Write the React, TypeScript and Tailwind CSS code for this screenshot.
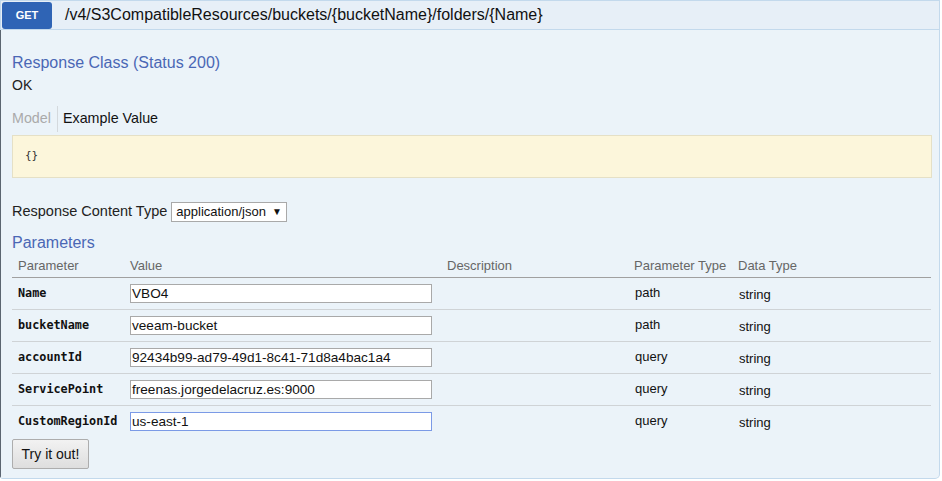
import React from "react";

const rows = [
  { name: "Name", value: "VBO4", type: "path" },
  { name: "bucketName", value: "veeam-bucket", type: "path" },
  { name: "accountId", value: "92434b99-ad79-49d1-8c41-71d8a4bac1a4", type: "query" },
  { name: "ServicePoint", value: "freenas.jorgedelacruz.es:9000", type: "query" },
  { name: "CustomRegionId", value: "us-east-1", type: "query", focused: true },
];

export default function App() {
  return (
    <div className="w-[942px] h-[481px] bg-white font-['Liberation_Sans',Arial,sans-serif] text-[#222]">
      <div className="w-[940px] h-[479px] border border-l-0 border-[#c3d9ec] rounded-br-[5px] rounded-bl-[3px] bg-[#ebf3f9] flex flex-col overflow-hidden">
        <div className="h-[29px] shrink-0 bg-[#e7eff7] border-b border-l border-[#c3d9ec] flex items-center">
          <div className="ml-[1px] w-[50px] h-[27px] bg-[#2f64b5] rounded-[3px] flex items-center justify-center text-white text-[11px] font-bold">
            GET
          </div>
          <div className="ml-[13px] text-[16px] text-[#111] leading-none">
            /v4/S3CompatibleResources/buckets/{"{"}bucketName{"}"}/folders/{"{"}Name{"}"}
          </div>
        </div>
        <div className="flex-1 border-l border-[#5b6570] px-[11px] pt-[23px]">
          <div className="text-[16px] leading-[20px] text-[#4a67b5]">Response Class (Status 200)</div>
          <div className="text-[14px] leading-[18px] mt-[3px] text-[#222]">OK</div>
          <div className="flex items-center mt-[12px] h-[26px] text-[14.3px]">
            <span className="text-[#aaa] pr-[6px]">Model</span>
            <span className="w-px h-[26px] bg-[#d4d9dd]" />
            <span className="pl-[5px] text-[#111]">Example Value</span>
          </div>
          <div className="mt-[3px] w-[920px] h-[43px] bg-[#fcf6db] border border-[#e5e0c6] flex items-center pl-[12px] text-[11px] font-['DejaVu_Sans_Mono',monospace] text-[#333]">
            {"{}"}
          </div>
          <div className="mt-[23px] flex items-center text-[14.5px]">
            <span>Response Content Type</span>
            <span className="ml-[4px] h-[20px] w-[116px] bg-white border border-[#a9a9a9] flex items-center pl-[4px] text-[13px] text-[#111]">
              application/json
              <span className="ml-[6px] text-[10px]">▼</span>
            </span>
          </div>
          <div className="mt-[10px] text-[16px] leading-[20px] text-[#4a67b5]">Parameters</div>
          <table className="mt-[2px] w-[919px] border-collapse table-fixed">
            <colgroup>
              <col className="w-[113px]" />
              <col className="w-[317px]" />
              <col className="w-[187px]" />
              <col className="w-[104px]" />
              <col className="w-[198px]" />
            </colgroup>
            <thead>
              <tr className="border-b border-[#a0a0a0] text-[13px] text-[#666] text-left">
                <th className="font-normal pl-[6px] pb-[3px] h-[23px] align-bottom leading-[16px]">Parameter</th>
                <th className="font-normal pl-[5px] pb-[3px] align-bottom leading-[16px]">Value</th>
                <th className="font-normal pl-[5px] pb-[3px] align-bottom leading-[16px]">Description</th>
                <th className="font-normal pl-[5px] pb-[3px] align-bottom leading-[16px]">Parameter Type</th>
                <th className="font-normal pl-[5px] pb-[3px] align-bottom leading-[16px]">Data Type</th>
              </tr>
            </thead>
            <tbody>
              {rows.map((r, i) => (
                <tr key={r.name} className={i < rows.length - 1 ? "border-b border-[#cfd3d6]" : ""}>
                  <td className="pl-[6px] align-top pt-[7px] font-['DejaVu_Sans_Mono',monospace] font-bold text-[11.8px] text-[#111]">
                    {r.name}
                  </td>
                  <td className="pl-[5px] py-[6px] align-top">
                    <div
                      className={
                        "w-[302px] h-[19px] bg-white flex items-center pl-[1px] text-[13.6px] text-[#111] border " +
                        (r.focused ? "border-[#7b9ae6]" : "border-[#a9a9a9]")
                      }
                    >
                      {r.value}
                    </div>
                  </td>
                  <td />
                  <td className="pl-[6px] align-top pt-[5px] text-[13px] text-[#111]">{r.type}</td>
                  <td className="pl-[6px] align-top pt-[7px] text-[13px] text-[#111]">string</td>
                </tr>
              ))}
            </tbody>
          </table>
          <button className="mt-[2px] w-[77px] h-[30px] border border-[#adadad] rounded-[2px] bg-gradient-to-b from-[#f2f2f2] to-[#dedede] text-[14px] text-[#111]">
            Try it out!
          </button>
        </div>
      </div>
    </div>
  );
}
